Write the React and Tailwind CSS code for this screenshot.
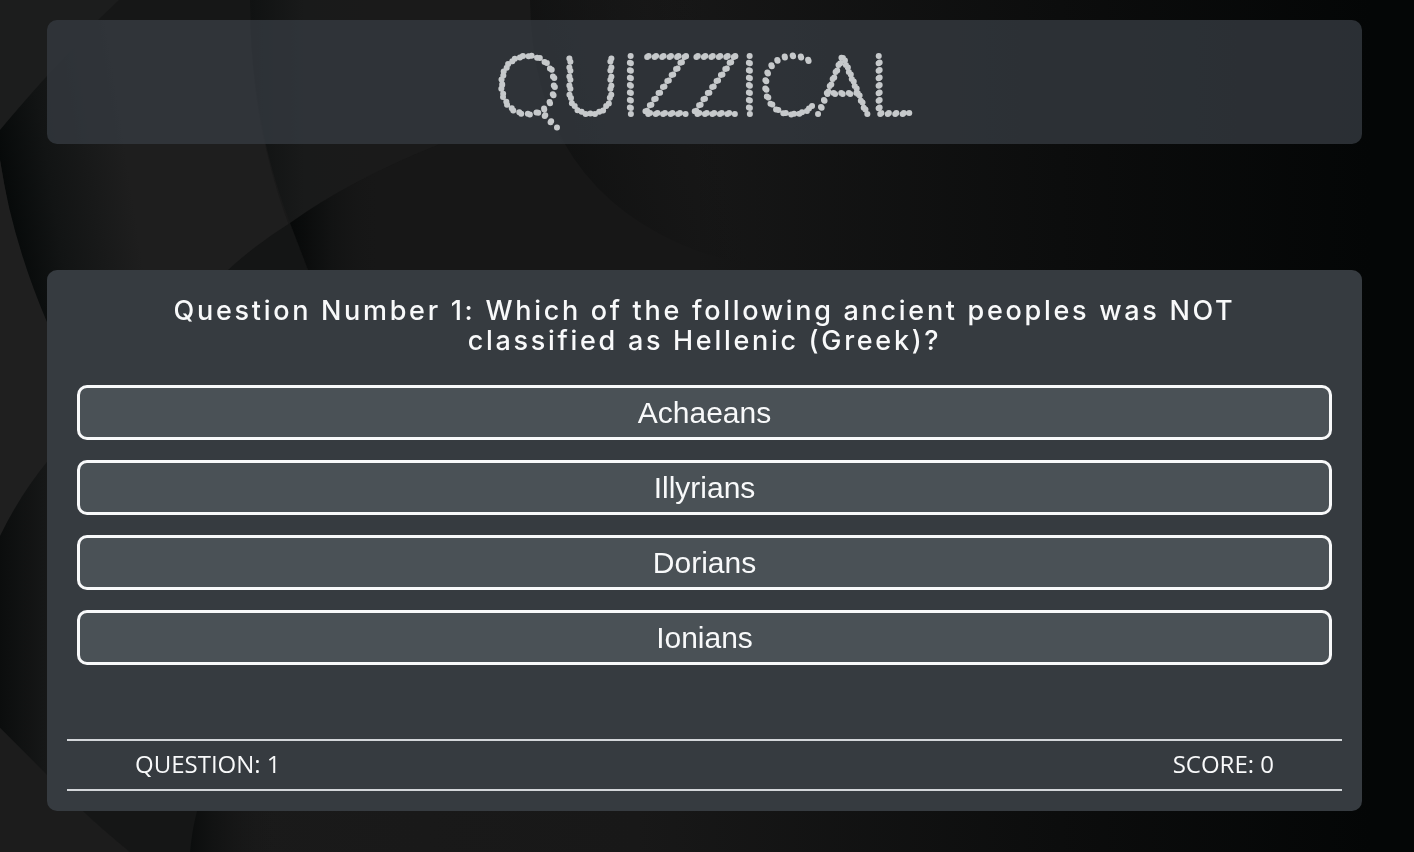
import { useState } from "react";

const QUESTION = {
  number: 1,
  text: "Which of the following ancient peoples was NOT classified as Hellenic (Greek)?",
  answers: ["Achaeans", "Illyrians", "Dorians", "Ionians"],
};

function Backdrop() {
  return (
    <svg
      aria-hidden="true"
      className="fixed inset-0 -z-10 h-full w-full"
      viewBox="0 0 1414 852"
      preserveAspectRatio="none"
    >
      <defs>
        <linearGradient id="base" x1="0" x2="1">
          <stop offset="0" stopColor="#1b1b1b" />
          <stop offset="0.45" stopColor="#181818" />
          <stop offset="0.75" stopColor="#0c0d0d" />
          <stop offset="0.97" stopColor="#040606" />
        </linearGradient>
        <linearGradient id="band" gradientUnits="userSpaceOnUse" x1="0" x2="130" y1="200" y2="180">
          <stop offset="0" stopColor="#050808" />
          <stop offset="0.4" stopColor="#121414" />
          <stop offset="1" stopColor="#1e1e1e" />
        </linearGradient>
        <linearGradient id="mid" gradientUnits="userSpaceOnUse" x1="250" x2="370" y1="0" y2="0">
          <stop offset="0" stopColor="#101212" />
          <stop offset="0.45" stopColor="#191a1a" />
          <stop offset="1" stopColor="#1a1a1a" />
        </linearGradient>
        <linearGradient id="deep" gradientUnits="userSpaceOnUse" x1="285" x2="380" y1="240" y2="240">
          <stop offset="0" stopColor="#050707" />
          <stop offset="0.5" stopColor="#121313" />
          <stop offset="1" stopColor="#171717" stopOpacity="0" />
        </linearGradient>
        <linearGradient id="arc" gradientUnits="userSpaceOnUse" x1="530" x2="740" y1="150" y2="90">
          <stop offset="0" stopColor="#0f1010" />
          <stop offset="1" stopColor="#161616" stopOpacity="0" />
        </linearGradient>
        <linearGradient id="low" gradientUnits="userSpaceOnUse" x1="0" x2="50" y1="600" y2="600">
          <stop offset="0" stopColor="#0b0d0d" />
          <stop offset="1" stopColor="#171818" />
        </linearGradient>
        <linearGradient id="foot" gradientUnits="userSpaceOnUse" x1="190" x2="280" y1="830" y2="830">
          <stop offset="0" stopColor="#0b0d0d" />
          <stop offset="1" stopColor="#191919" stopOpacity="0" />
        </linearGradient>
      </defs>
      <rect width="1414" height="852" fill="url(#base)" />
      <path d="M0 0H119Q50 70 0 130Z" fill="#1c1d1d" />
      <path d="M119 0H250Q250 150 308 270L400 500H60L0 160V130Q50 70 119 0Z" fill="url(#band)" />
      <path d="M119 0H250V20H98Z" fill="#161717" />
      <path d="M250 0H530Q532 80 562 144H440Q350 180 290 223Q250 120 250 0Z" fill="url(#mid)" />
      <path d="M290 223Q255 245 228 270H308Z" fill="#141515" />
      <path d="M440 144Q350 180 290 223L308 270H700V144Z" fill="#171717" />
      <path d="M440 144Q350 180 290 223L308 270H440Z" fill="url(#deep)" />
      <path d="M530 0Q532 190 700 252L760 270V0Z" fill="url(#arc)" />
      <path d="M0 160Q12 240 47 322V462Q20 495 0 536Z" fill="#1f1f1f" />
      <path d="M0 536Q20 495 47 462V775L0 728Z" fill="url(#low)" />
      <path d="M0 728L47 775Q80 811 130 852H0Z" fill="#1c1c1c" />
      <path d="M47 775Q80 811 130 852H190L197 811V775Z" fill="#151616" />
      <path d="M190 852Q192 830 197 811H300V852Z" fill="url(#foot)" />
    </svg>
  );
}

export default function App() {
  const [score, setScore] = useState(0);
  const [picked, setPicked] = useState(null);

  const choose = (answer) => {
    if (picked) return;
    setPicked(answer);
    if (answer === "Illyrians") setScore(score + 1);
  };

  return (
    <div className="relative isolate min-h-screen bg-[#0c0d0d] pt-5 pr-[52px] pb-10 pl-[47px] text-[#f8f9fa]">
      <Backdrop />
      <header className="flex justify-center rounded-[10px] bg-[#343a40]/80 py-3">
        <h1>
          <svg className="block h-[100px] w-[440px] overflow-visible" viewBox="0 0 440 100">
            <text
              x="218"
              y="82"
              textAnchor="middle"
              fontFamily="Lato, sans-serif"
              fontWeight="100"
              fontSize="83"
              fill="none"
              stroke="#c6c9cb"
              strokeWidth="6"
              strokeLinecap="round"
              strokeDasharray="0 7.47"
            >
              <tspan strokeDasharray="0 8.6">Q</tspan>
              <tspan strokeDasharray="0 9.05">U</tspan>
              <tspan>IZZI</tspan>
              <tspan strokeDasharray="0 8.1">C</tspan>
              <tspan strokeDasharray="0 7.6">A</tspan>
              <tspan>L</tspan>
            </text>
          </svg>
        </h1>
      </header>

      <main className="mt-[126px] rounded-[10px] bg-[#363b40] px-5 pt-[26px] pb-5">
        <h2 className="mx-auto max-w-[1100px] text-center font-['Inter',sans-serif] text-[27px] leading-[30px] font-medium tracking-widest">
          {`Question Number ${QUESTION.number}: ${QUESTION.text}`}
        </h2>
        <div className="mt-[29px] flex flex-col gap-5 px-2.5">
          {QUESTION.answers.map((answer) => (
            <button
              key={answer}
              type="button"
              onClick={() => choose(answer)}
              className="h-[55px] w-full cursor-pointer rounded-[10px] border-[3px] border-[#f8f9fa] bg-[#4a5156] font-['Liberation_Sans',sans-serif] text-[30px] leading-9"
            >
              {answer}
            </button>
          ))}
        </div>
        <footer className="mt-[74px] flex h-[52px] items-center justify-between border-y-2 border-[#d3d6d9] px-[68px] pb-0.5 font-['Open_Sans',sans-serif] text-2xl">
          <p>{`QUESTION: ${QUESTION.number}`}</p>
          <p>{`SCORE: ${score}`}</p>
        </footer>
      </main>
    </div>
  );
}
